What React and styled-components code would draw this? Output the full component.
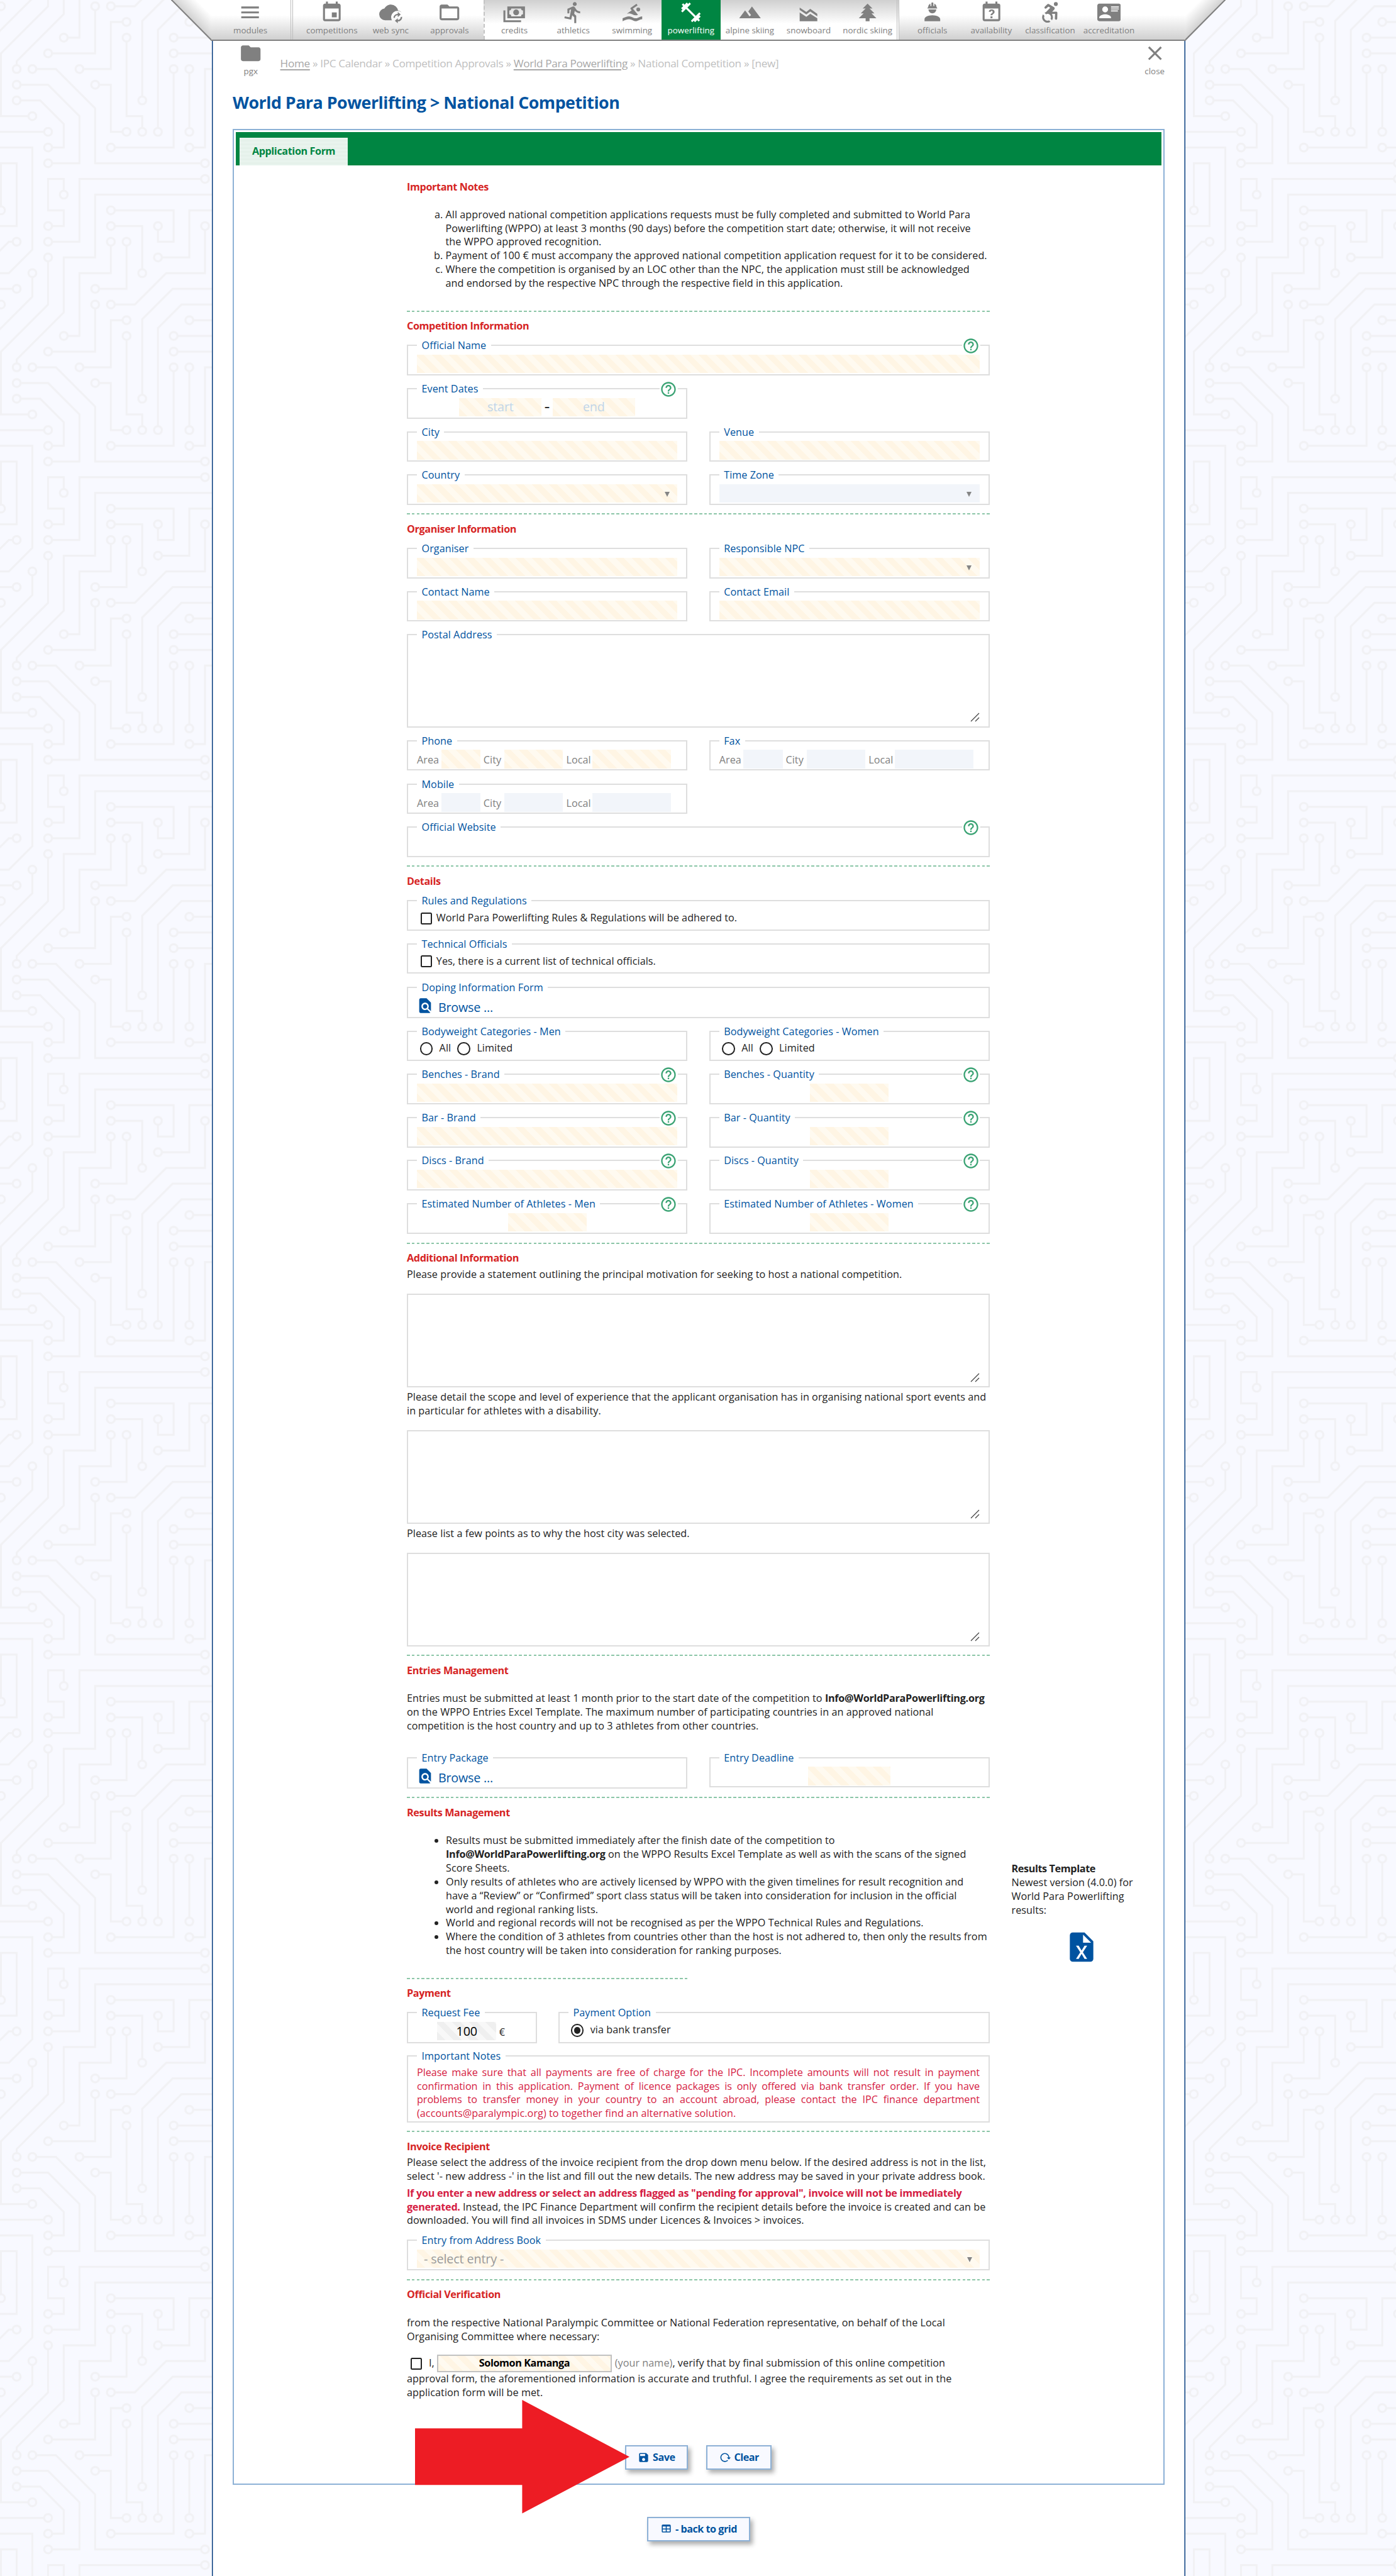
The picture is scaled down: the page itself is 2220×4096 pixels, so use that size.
import React from "react";
import styled, { createGlobalStyle, css } from "styled-components";
import {
  MdMenu, MdEvent, MdFolderOpen, MdDirectionsRun, MdFitnessCenter, MdFolder, MdClose,
  MdHelpOutline, MdFindInPage, MdSave,
} from "react-icons/md";

const c = {
  text: "#222222", grey: "#808080", red: "#d62424", crimson: "#d51c43", blue: "#0053a0",
  green: "#008542", line: "#dedede", frame: "#8db1d6",
};

const Global = createGlobalStyle`
  *, *::before, *::after { box-sizing: border-box; }
  html, body { margin: 0; padding: 0; }
  body {
    width: 2220px; height: 4096px; overflow: hidden; background: #f8f9ff; color: ${c.text};
    font-family: "Open Sans", "Noto Sans", sans-serif; font-size: 16.2px; line-height: 21.84px;
    letter-spacing: 0.05px;
  }
`;

const amber = css`background: repeating-linear-gradient(45deg, #fff5e4 0 9.36px, #fffaf0 9.36px 18.72px);`;
const ash = css`background: repeating-linear-gradient(45deg, #efefef 0 9.36px, #f8f8f8 9.36px 18.72px);`;
const pale = css`background: #f2f5fa;`;
const tones = { amber, ash, pale };

/* ---------- shell ---------- */
const Screen = styled.div`position: relative; width: 2220px; height: 4096px; overflow: hidden;`;
const Backdrop = styled.svg`position: absolute; inset: 0; width: 2220px; height: 4096px; z-index: -1;`;
const TopBar = styled.header`display: flex; width: 1677px; height: 65px; margin: 0 0 0 272px;`;
const Cap = styled.svg`display: block; flex: none; width: 64px; height: 65px;`;
const Bar = styled.nav`
  flex: 1; display: flex; height: 65px; border-bottom: 2px solid #808080;
  background: linear-gradient(#fff 0, #fff 38%, #d0d0d0 100%);
`;
const Group = styled.div`
  display: flex; height: 63px; padding: 0 ${p => p.$pr || 0}px 0 ${p => p.$pl || 0}px;
  ${p => p.$sep === "double" && "border-right: 4px double #bdbdbd;"}
  ${p => p.$inverse && css`
    border-left: 2px dashed #c4c4c4; border-right: 4px double #bdbdbd;
    background: linear-gradient(#d0d0d0 0, #fff 60%);
  `}
`;
const NavItem = styled.div`
  width: 93.6px; flex: none; height: 63px; display: flex; flex-direction: column; align-items: center;
  padding-top: 1px; font-size: 13.4px; line-height: 18px; letter-spacing: 0; white-space: nowrap;
  color: ${p => (p.$active ? "#fff" : c.grey)}; background: ${p => (p.$active ? c.green : "none")};
  svg { width: 37.4px; height: 37.4px; display: block; flex: none; margin-bottom: 1px; }
`;
const Page = styled.main`
  width: 1548px; height: 4031px; margin-left: 337px; padding: 0 1px; background: #fff;
  border: solid #00387a; border-width: 0 1px; box-shadow: inset 1px 0 #8ba5c4, inset -1px 0 #8ba5c4;
`;
const Crumbs = styled.div`display: flex; justify-content: space-between; height: 65px; padding: 0 0 0 13px;`;
const CrumbLine = styled.div`
  flex: 1; padding: 25px 0 0 0; font-size: 17.2px; line-height: 22px; letter-spacing: -0.34px; color: #c0c0c0; white-space: pre;
  u { color: #a8a8a8; text-underline-offset: 3px; text-decoration-thickness: 2px; }
`;
const Title = styled.h1`
  margin: 14px 0 0 31px; font-size: 26.8px; line-height: 38px; font-weight: 700; letter-spacing: -0.49px; color: ${c.blue};
`;
const Panel = styled.section`
  width: 1482px; height: 3746px; margin: 22.5px 0 0 31px; padding: 3px; border: 2px solid ${c.frame};
`;
const TabBar = styled.div`height: 53px; background: ${c.green}; padding: 9px 0 0 6px; display: flex;`;
const Tab = styled.div`
  width: 172px; height: 44px; padding-top: 11px; text-align: center; color: ${c.green}; font-weight: 700;
  letter-spacing: -0.4px; background: repeating-linear-gradient(#e9f4ee 0 3px, #e5f1ea 3px 6px);
`;
const Form = styled.div`position: relative; width: 927px; margin-left: 272px; padding-top: 0.1px;`;

/* ---------- form parts ---------- */
const Rule = styled.div`
  height: 2px; width: ${p => p.$w || "100%"}; margin-top: ${p => p.$mt}px;
  background: repeating-linear-gradient(90deg, #8cc6a8 0 4.68px, transparent 4.68px 7.75px);
`;
const Heading = styled.h2`
  margin: ${p => p.$mt}px 0 0; font-size: 16.2px; line-height: 22px; font-weight: 700; letter-spacing: -0.37px; color: ${c.red};
`;
const Lines = styled.div`
  margin-top: ${p => p.$mt}px; white-space: nowrap;
  b { letter-spacing: -0.28px; }
`;
const Line = styled.div`
  height: 21.84px;
  ${p => p.$justify && "text-align: justify; text-align-last: justify; letter-spacing: -0.05px; white-space: normal;"}
`;
const Alpha = styled.ol`
  margin: ${p => p.$mt}px 0 0; padding: 0 0 0 61.5px; white-space: nowrap; list-style: lower-alpha;
`;
const Bullets = styled.ul`margin: 0; padding: 0 0 0 62px; white-space: nowrap; b { letter-spacing: -0.28px; }`;
const Row = styled.div`display: flex; gap: 34.5px; align-items: flex-start; margin-top: ${p => p.$mt}px;`;
const Box = styled.fieldset`
  position: relative; width: ${p => p.$w || 927}px; height: ${p => p.$h || 58.6}px; min-width: 0; margin: 0;
  padding: ${p => p.$pt ?? 3.6}px 14px 0; border: 2px solid ${c.line};
`;
const Legend = styled.legend`padding: 0 7.5px; height: 22px; line-height: 22px; color: ${c.blue};`;
const HelpMark = styled.span`
  position: absolute; right: 13.5px; top: -24px; width: 28.5px; height: 28px; background: linear-gradient(#fff, #fff) center / 100% 8px no-repeat;
  color: #3ba374; svg { width: 28px; height: 28px; display: block; }
`;
const Input = styled.div`
  ${p => tones[p.$tone || "amber"]}
  width: ${p => (p.$w ? p.$w + "px" : "100%")}; height: 29.4px; display: flex; align-items: center;
  justify-content: ${p => (p.$center ? "center" : "space-between")}; flex: none; white-space: pre;
  padding: ${p => (p.$center ? 0 : "0 12.5px 0 11px")}; font-size: 19.8px; letter-spacing: -0.15px; color: ${p => p.$color || "#999"};
`;
const Caret = styled.i`border: solid transparent; border-width: 8px 4.5px 0; border-top-color: #858585; margin: 3px 0 0 auto;`;
const Parts = styled.div`
  display: flex; justify-content: ${p => (p.$center ? "center" : "flex-start")}; align-items: center;
  color: ${p => p.$color || c.text}; white-space: pre;
`;
const PartLabel = styled.span`width: ${p => p.$w}px; padding-left: ${p => p.$pl || 0}px; padding-top: 4px; flex: none;`;
const Dash = styled.span`width: 17.5px; text-align: center; font-weight: 700; font-size: 16px;`;
const Area = styled.div`
  height: ${p => p.$h}px; margin-top: ${p => p.$mt || 0}px; border: ${p => (p.$bare ? 0 : 2)}px solid ${c.line};
  padding: 0 ${p => (p.$bare ? 0 : 14)}px 6px 0; display: flex; justify-content: flex-end; align-items: flex-end;
  svg { width: 15px; height: 15px; display: block; }
`;
const Check = styled.span`
  flex: none; display: inline-block; width: 18.8px; height: 18.8px; border: 2.4px solid #222; border-radius: 2.5px; margin: 0 6.5px 0 5.5px;
`;
const Radio = styled.span`
  flex: none; width: 20.6px; height: 20.6px; border: 2.3px solid #222; border-radius: 50%; margin-right: 10.5px;
  display: flex; align-items: center; justify-content: center;
  &::after { content: ""; width: 10.4px; height: 10.4px; border-radius: 50%; background: ${p => (p.$on ? "#222" : "none")}; }
`;
const Word = styled.span`${p => p.$w && `width: ${p.$w}px;`} flex: none;`;
const Browse = styled.div`
  display: flex; align-items: center; gap: 7px; color: ${c.blue}; font-size: 19.8px; letter-spacing: -0.25px; white-space: pre;
  padding-top: 3px; svg { width: 28px; height: 28px; margin: -6px 0 0 -1px; }
`;
const Split = styled.div`display: flex; gap: 34.5px; margin-top: 23.4px;`;
const MainCol = styled.div`width: 927px; flex: none;`;
const Aside = styled.aside`
  flex: none; width: 220px; padding-top: 45px; white-space: nowrap; display: flex; flex-direction: column;
  b { letter-spacing: -0.38px; } svg { width: 56px; height: 56px; margin: 19px 0 0 83px; color: ${c.blue}; }
`;
const NameField = styled.span`
  ${amber} width: 278.3px; height: 28px; border: 2px solid #c2c2c2; display: flex; align-items: center; justify-content: center;
  font-weight: 700; color: #000; letter-spacing: -0.4px; margin: 0 4.5px 0 4px;
`;
const Muted = styled.span`color: ${c.grey};`;
const Warning = styled.b`color: ${c.crimson};`;
const Arrow = styled.svg`position: absolute; left: 13.3px; top: 3553.8px; width: 341px; height: 181px;`;
const Actions = styled.div`display: flex; justify-content: center; gap: 29.5px; margin-top: ${p => p.$mt}px;`;
const Button = styled.button`
  font: inherit; font-weight: 700; letter-spacing: -0.5px; color: ${c.blue}; width: ${p => p.$w}px; height: 38.5px; padding: 1px 0 0;
  display: flex; align-items: center; justify-content: center; gap: 5px; border: 2px solid ${c.frame}; background: #f8f9ff;
  box-shadow: 4px 5px 7px rgba(0, 0, 0, 0.32); white-space: pre;
  svg { width: 19px; height: 19px; flex: none; margin-top: -2px; }
`;

/* ---------- icons ---------- */
const Glyph = ({ d, children }) => (
  <svg viewBox="0 0 24 24" fill="currentColor">{d ? <path d={d} /> : children}</svg>
);
const paths = {
  cash: "M5,6H23V18H5V6M14,9A3,3 0 0,1 17,12A3,3 0 0,1 14,15A3,3 0 0,1 11,12A3,3 0 0,1 14,9M9,8A2,2 0 0,1 7,10V14A2,2 0 0,1 9,16H19A2,2 0 0,1 21,14V10A2,2 0 0,1 19,8H9M1,10H3V20H19V22H1V10Z",
  swim: "M2,18C4.22,17 6.44,16 8.67,16C10.89,16 13.11,18 15.33,18C17.56,18 19.78,16 22,16V19C19.78,19 17.56,21 15.33,21C13.11,21 10.89,19 8.67,19C6.44,19 4.22,20 2,21V18M8.67,13C7.89,13 7.12,13.12 6.35,13.32L11.27,9.88L10.23,8.64C10.09,8.47 10,8.24 10,8C10,7.66 10.17,7.35 10.44,7.17L16.16,3.17L17.31,4.8L12.47,8.19L17.7,14.42C16.91,14.75 16.12,15 15.33,15C13.11,15 10.89,13 8.67,13M18,7A2,2 0 0,1 20,9A2,2 0 0,1 18,11A2,2 0 0,1 16,9A2,2 0 0,1 18,7Z",
  alpine: "M14,6L10.25,11L13.1,14.8L11.5,16C9.81,13.75 7,10 7,10L1,18H23L14,6Z",
  slope: "M3,7L9.8,11.6L13.8,8.4L21,13.4V16L13.8,11L9.8,14.2L3,9.4ZM3,12L9.8,16.6L13.8,13.5L21,18V21H3Z",
  pine: "M10,21V18H3L8,13H5L10,8H7L12,3L17,8H14L19,13H16L21,18H14V21H10Z",
  official: "M12,15C7.58,15 4,16.79 4,19V21H20V19C20,16.79 16.42,15 12,15M8,9A4,4 0 0,0 12,13A4,4 0 0,0 16,9M11.5,2C11.2,2 11,2.21 11,2.5V5.5H10V3C10,3 7.75,3.86 7.75,6.75C7.75,6.75 7,6.89 7,8H17C16.95,6.89 16.25,6.75 16.25,6.75C16.25,3.86 14,3 14,3V5.5H13V2.5C13,2.21 12.81,2 12.5,2H11.5Z",
  question: "M6,1V3H5C3.89,3 3,3.89 3,5V19A2,2 0 0,0 5,21H19A2,2 0 0,0 21,19V5A2,2 0 0,0 19,3H18V1H16V3H8V1H6M5,8H19V19H5V8M12.19,9C11.32,9 10.62,9.2 10.08,9.59C9.56,10 9.3,10.57 9.31,11.36L9.32,11.39H11.25C11.26,11.09 11.35,10.86 11.53,10.7C11.71,10.55 11.93,10.47 12.19,10.47C12.5,10.47 12.76,10.57 12.94,10.75C13.12,10.94 13.2,11.2 13.2,11.5C13.2,11.82 13.13,12.09 12.97,12.32C12.83,12.55 12.62,12.75 12.36,12.91C11.85,13.25 11.5,13.55 11.31,13.82C11.11,14.08 11,14.5 11,15H13C13,14.69 13.04,14.44 13.13,14.26C13.22,14.08 13.39,13.9 13.64,13.74C14.09,13.5 14.46,13.21 14.75,12.81C15.04,12.41 15.19,12 15.19,11.5C15.19,10.74 14.92,10.13 14.38,9.68C13.85,9.23 13.12,9 12.19,9M11,16V18H13V16H11Z",
  wheelchair: "M18.4,11.2L14.3,11.4L16.6,8.8C16.8,8.5 16.9,8 16.8,7.5C16.7,7.2 16.6,6.9 16.3,6.7L10.9,3.5C10.5,3.2 9.9,3.3 9.5,3.6L6.8,6.1C6.3,6.6 6.2,7.3 6.7,7.8C7.1,8.3 7.9,8.3 8.4,7.9L10.4,6.1L12.3,7.2L8.1,11.5C8,11.6 8,11.7 7.9,11.7C7.4,11.9 6.9,12.1 6.5,12.4L8,13.9C8.5,13.7 9,13.5 9.5,13.5C11.4,13.5 13,15.1 13,17C13,17.6 12.9,18.1 12.6,18.5L14.1,20C14.7,19.1 15,18.1 15,17C15,15.8 14.6,14.6 13.9,13.7L17.2,13.4L17,18.2C16.9,18.9 17.4,19.4 18.1,19.5H18.2C18.8,19.5 19.3,19 19.4,18.4L19.6,12.5C19.6,12.2 19.5,11.8 19.3,11.6C19,11.3 18.7,11.2 18.4,11.2M18,5.5A2,2 0 0,0 20,3.5A2,2 0 0,0 18,1.5A2,2 0 0,0 16,3.5A2,2 0 0,0 18,5.5M12.5,21.6C11.6,22.2 10.6,22.5 9.5,22.5C6.5,22.5 4,20 4,17C4,15.9 4.3,14.9 4.9,14L6.4,15.5C6.2,16 6,16.5 6,17C6,18.9 7.6,20.5 9.5,20.5C10.1,20.5 10.6,20.4 11,20.1L12.5,21.6Z",
  card: "M2,3H22C23.05,3 24,3.95 24,5V19C24,20.05 23.05,21 22,21H2C0.95,21 0,20.05 0,19V5C0,3.95 0.95,3 2,3M14,6V7H22V6H14M14,8V9H21.5L22,9V8H14M14,10V11H21V10H14M8,13.91C6,13.91 2,15 2,17V18H14V17C14,15 10,13.91 8,13.91M8,6A3,3 0 0,0 5,9A3,3 0 0,0 8,12A3,3 0 0,0 11,9A3,3 0 0,0 8,6Z",
  excel: "M14,2H6A2,2 0 0,0 4,4V20A2,2 0 0,0 6,22H18A2,2 0 0,0 20,20V8L14,2M15.8,20H14L12,16.6L10,20H8.2L11.1,15.5L8.2,11H10L12,14.4L14,11H15.8L12.9,15.5L15.8,20M13,9V3.5L18.5,9H13Z",
  reload: "M2 12C2 16.97 6.03 21 11 21C13.39 21 15.68 20.06 17.4 18.4L15.9 16.9C14.63 18.25 12.86 19 11 19C4.76 19 1.64 11.46 6.05 7.05C10.46 2.64 18 5.77 18 12H15L19 16H19.1L23 12H20C20 7.03 15.97 3 11 3C6.03 3 2 7.03 2 12Z",
  table: "M5,4H19A2,2 0 0,1 21,6V18A2,2 0 0,1 19,20H5A2,2 0 0,1 3,18V6A2,2 0 0,1 5,4M5,8V12H11V8H5M13,8V12H19V8H13M5,14V18H11V14H5M13,14V18H19V14H13Z",
};
const CloudSync = () => (
  <Glyph>
    <path d="M19.35 10.04A7.49 7.49 0 0 0 12 4C9.11 4 6.6 5.64 5.35 8.04A6 6 0 0 0 6 20h7a6.5 6.5 0 0 1 10-8 5 5 0 0 0-3.65-1.96z" />
    <g fill="none" stroke="currentColor" strokeWidth="1.5">
      <path d="M15.3 17.6a3.6 3.6 0 0 1 3.6-3.4h1" /><path d="M22.7 16.6a3.6 3.6 0 0 1-3.6 3.9h-1" />
    </g>
    <path d="M19 11.6l3 2.6-3 2.6zM19 17.9l-3 2.6 3 2.6z" />
  </Glyph>
);

const traces =
  "M44.1 224a5 5 0 1 1 0 2H0v-2h44.1zm160 48a5 5 0 1 1 0 2H82v-2h122.1zm57.8-46a5 5 0 1 1 0-2H304v2h-42.1zm0 16a5 5 0 1 1 0-2H304v2h-42.1zm6.2-114a5 5 0 1 1 0 2h-86.2a5 5 0 1 1 0-2h86.2zm-256-48a5 5 0 1 1 0 2H0v-2h12.1zm185.8 34a5 5 0 1 1 0-2h86.2a5 5 0 1 1 0 2h-86.2zM258 12.1a5 5 0 1 1-2 0V0h2v12.1zm-64 208a5 5 0 1 1-2 0v-54.2a5 5 0 1 1 2 0v54.2zm48-198.2V80h62v2h-64V21.9a5 5 0 1 1 2 0zm16 16V64h46v2h-48V37.9a5 5 0 1 1 2 0zm-128 96V208h16v12.1a5 5 0 1 1-2 0V210h-16v-76.1a5 5 0 1 1 2 0zm-5.9-21.9a5 5 0 1 1 0 2H114v48H85.9a5 5 0 1 1 0-2H112v-48h12.1zm-6.2 130a5 5 0 1 1 0-2H176v-74.1a5 5 0 1 1 2 0V242h-60.1zm-16-64a5 5 0 1 1 0-2H114v48h10.1a5 5 0 1 1 0 2H112v-48h-10.1zM66 284.1a5 5 0 1 1-2 0V274H50v30h-2v-32h18v12.1zM236.1 176a5 5 0 1 1 0 2H226v94h48v32h-2v-30h-48v-98h12.1zm25.8-30a5 5 0 1 1 0-2H274v44.1a5 5 0 1 1-2 0V146h-10.1zm-64 96a5 5 0 1 1 0-2H208v-80h16v-14h-42.1a5 5 0 1 1 0-2H226v18h-16v80h-12.1zm86.2-210a5 5 0 1 1 0 2H272V0h2v32h10.1zM98 101.9V146H53.9a5 5 0 1 1 0-2H96v-42.1a5 5 0 1 1 2 0zM53.9 34a5 5 0 1 1 0-2H80V0h2v34H53.9zm60.1 3.9V66H82v64H69.9a5 5 0 1 1 0-2H80V64h32V37.9a5 5 0 1 1 2 0zM101.9 82a5 5 0 1 1 0-2H128V37.9a5 5 0 1 1 2 0V82h-28.1zm16-64a5 5 0 1 1 0-2H146v44.1a5 5 0 1 1-2 0V18h-26.1zm102.2 270a5 5 0 1 1 0 2H98v14h-2v-16h124.1zM242 149.9V160h16v34h-16v62h48v48h-2v-46h-48v-66h16v-30h-16v-12.1a5 5 0 1 1 2 0zM53.9 18a5 5 0 1 1 0-2H64V2H48V0h18v18H53.9zm112 32a5 5 0 1 1 0-2H192V0h50v2h-48v48h-28.1zm-48-48a5 5 0 0 1-9.8-2h2.07a3 3 0 1 0 5.66 0H178v34h-18V21.9a5 5 0 1 1 2 0V32h14V2h-58.1zm0 96a5 5 0 1 1 0-2H137l32-32h39V21.9a5 5 0 1 1 2 0V66h-40.17l-32 32H117.9zm28.1 90.1a5 5 0 1 1-2 0v-76.51L175.59 80H224V21.9a5 5 0 1 1 2 0V82h-49.59L146 112.41v75.69zm16 32a5 5 0 1 1-2 0v-99.51L184.59 96H300.1a5 5 0 0 1 3.9-3.9v2.07a3 3 0 0 0 0 5.66v2.07a5 5 0 0 1-3.9-3.9H185.41L162 121.41v98.69zm-144-64a5 5 0 1 1-2 0v-3.51l48-48V48h32V0h2v50H66v55.41l-48 48v2.69zM50 53.9v43.51l-48 48V208h26.1a5 5 0 1 1 0 2H0v-65.41l48-48V53.9a5 5 0 1 1 2 0zm-16 16V89.41l-34 34v-2.82l32-32V69.9a5 5 0 1 1 2 0zM12.1 32a5 5 0 1 1 0 2H9.41L0 43.41V40.6L8.59 32h3.51zm265.8 18a5 5 0 1 1 0-2h18.69l7.41-7.41v2.82L297.41 50H277.9zm-16 160a5 5 0 1 1 0-2H288v-71.41l16-16v2.82l-14 14V210h-28.1zm-208 32a5 5 0 1 1 0-2H64v-22.59L40.59 194H21.9a5 5 0 1 1 0-2H41.41L66 216.59V242H53.9zm150.2 14a5 5 0 1 1 0 2H96v-56.6L56.6 162H37.9a5 5 0 1 1 0-2h19.5L98 200.6V256h106.1zm-150.2 2a5 5 0 1 1 0-2H80v-46.59L48.59 178H21.9a5 5 0 1 1 0-2H49.41L82 208.59V258H53.9zM34 39.8v1.61L9.41 66H0v-2h8.59L32 40.59V0h2v39.8zM2 300.1a5 5 0 0 1 3.9 3.9H3.83A3 3 0 0 0 0 302.17V256h18v48h-2v-46H2v42.1zM34 241v63h-2v-62H0v-2h34v1zM17 18H0v-2h16V0h2v18h-1zm273-2h14v2h-16V0h2v16zm-32 273v15h-2v-14h-14v14h-2v-16h18v1zM0 92.1A5.02 5.02 0 0 1 6 97a5 5 0 0 1-6 4.9v-2.07a3 3 0 1 0 0-5.66V92.1zM80 272h2v32h-2v-32zm37.9 32h-2.07a3 3 0 0 0-5.66 0h-2.07a5 5 0 0 1 9.8 0zM5.9 0A5.02 5.02 0 0 1 0 5.9V3.83A3 3 0 0 0 3.83 0H5.9zm294.2 0h2.07A3 3 0 0 0 304 3.83V5.9a5 5 0 0 1-3.9-5.9zm3.9 300.1v2.07a3 3 0 0 0-1.83 1.83h-2.07a5 5 0 0 1 3.9-3.9z";
const vias = [
  [49,225],[209,273],[257,225],[257,241],[273,129],[177,129],[17,81],[193,113],[289,113],[257,17],[193,225],[193,161],
  [241,17],[257,33],[145,225],[129,129],[129,113],[81,161],[113,241],[177,161],[97,177],[129,225],[65,289],[241,177],
  [257,145],[273,193],[193,241],[177,145],[289,33],[49,145],[97,97],[49,33],[65,129],[113,33],[97,81],[129,33],[113,17],
  [145,65],[225,289],[241,145],[49,17],[161,49],[161,17],[113,97],[209,17],[145,193],[225,17],[161,225],[17,161],
  [33,209],[49,49],[33,65],[17,33],[273,49],[257,209],[49,241],[17,193],[209,257],[33,161],[49,257],[17,177],
];

const Circuit = () => (
  <Backdrop>
    <defs>
      <pattern id="circuit" width="304" height="304" patternUnits="userSpaceOnUse" patternTransform="translate(0 -141.4) scale(1.56008)">
        <path d={traces} fill="#f1f1f4" />
        {vias.map(([x, y]) => <circle key={x + "-" + y} cx={x} cy={y} r="3" fill="#f8f9ff" />)}
      </pattern>
    </defs>
    <rect width="2220" height="4096" fill="url(#circuit)" />
  </Backdrop>
);

const CapLeft = () => (
  <Cap viewBox="0 0 64 65">
    <defs>
      <linearGradient id="capL" gradientUnits="userSpaceOnUse" x1="64" y1="64" x2="84" y2="44">
        <stop offset="0" stopColor="#d0d0d0" /><stop offset="1" stopColor="#fff" />
      </linearGradient>
    </defs>
    <path d="M0 0H64.5V65H64z" fill="url(#capL)" /><path d="M0 -1L65 64.5" stroke="#808080" strokeWidth="2" />
  </Cap>
);
const CapRight = () => (
  <Cap viewBox="0 0 64 65">
    <defs>
      <linearGradient id="capR" gradientUnits="userSpaceOnUse" x1="0" y1="64" x2="-20" y2="44">
        <stop offset="0" stopColor="#d0d0d0" /><stop offset="1" stopColor="#fff" />
      </linearGradient>
    </defs>
    <path d="M64 0H0V65H0.5z" fill="url(#capR)" /><path d="M64 -1L-1 64.5" stroke="#808080" strokeWidth="2" />
  </Cap>
);

/* ---------- composed fields ---------- */
const HALF = 446.2;
const Field = ({ label, help, children, w, h, pt }) => (
  <Box $w={w} $h={h} $pt={pt}>
    <Legend>{label}</Legend>
    {help && <HelpMark><MdHelpOutline /></HelpMark>}
    {children}
  </Box>
);
const Select = ({ tone, children }) => <Input $tone={tone}>{children}<Caret /></Input>;
const Grip = () => (
  <svg viewBox="0 0 15 15"><path d="M1 14L14 1M8 14L14 8" stroke="#444" strokeWidth="1.3" fill="none" /></svg>
);
const PhoneParts = ({ tone }) => (
  <Parts $color={c.grey}>
    <PartLabel $w={38.8}>Area</PartLabel><Input $tone={tone} $w={62.7} $center />
    <PartLabel $w={37.6} $pl={4.3}>City</PartLabel><Input $tone={tone} $w={93.4} $center />
    <PartLabel $w={47} $pl={5}>Local</PartLabel><Input $tone={tone} $w={124.8} $center />
  </Parts>
);
const Categories = () => (
  <Parts>
    <Word $w={4.5} /><Radio /><Word $w={28.7}>All</Word><Radio />Limited
  </Parts>
);
const Centered = ({ w }) => <Parts $center><Input $w={w} $center /></Parts>;
const Upload = () => <Browse><MdFindInPage />Browse ...</Browse>;
const Nav = ({ icon, label, active }) => <NavItem $active={active}>{icon}{label}</NavItem>;

export default function App() {
  return (
    <Screen>
      <Global />
      <Circuit />
      <TopBar>
        <CapLeft />
        <Bar>
          <Group $pl={15.4} $pr={17} $sep="double"><Nav icon={<MdMenu />} label="modules" /></Group>
          <Group $pl={15} $pr={7.5}>
            <Nav icon={<MdEvent />} label="competitions" />
            <Nav icon={<CloudSync />} label="web sync" />
            <Nav icon={<MdFolderOpen />} label="approvals" />
          </Group>
          <Group $inverse>
            <Nav icon={<Glyph d={paths.cash} />} label="credits" />
            <Nav icon={<MdDirectionsRun />} label="athletics" />
            <Nav icon={<Glyph d={paths.swim} />} label="swimming" />
            <Nav icon={<MdFitnessCenter />} label="powerlifting" active />
            <Nav icon={<Glyph d={paths.alpine} />} label="alpine skiing" />
            <Nav icon={<Glyph d={paths.slope} />} label="snowboard" />
            <Nav icon={<Glyph d={paths.pine} />} label="nordic skiing" />
          </Group>
          <Group $pl={5.5}>
            <Nav icon={<Glyph d={paths.official} />} label="officials" />
            <Nav icon={<Glyph d={paths.question} />} label="availability" />
            <Nav icon={<Glyph d={paths.wheelchair} />} label="classification" />
            <Nav icon={<Glyph d={paths.card} />} label="accreditation" />
          </Group>
        </Bar>
        <CapRight />
      </TopBar>

      <Page>
        <Crumbs>
          <NavItem><MdFolder />pgx</NavItem>
          <CrumbLine>
            <u>Home</u>{" » IPC Calendar » Competition Approvals » "}<u>World Para Powerlifting</u>{" » National Competition » [new]"}
          </CrumbLine>
          <NavItem><MdClose />close</NavItem>
        </Crumbs>
        <Title>World Para Powerlifting &gt; National Competition</Title>

        <Panel>
          <TabBar><Tab>Application Form</Tab></TabBar>
          <Form>
            <Heading $mt={23.1}>Important Notes</Heading>
            <Alpha $mt={23}>
              <li>
                <Line>All approved national competition applications requests must be fully completed and submitted to World Para</Line>
                <Line>Powerlifting (WPPO) at least 3 months (90 days) before the competition start date; otherwise, it will not receive</Line>
                <Line>the WPPO approved recognition.</Line>
              </li>
              <li><Line>Payment of 100 € must accompany the approved national competition application request for it to be considered.</Line></li>
              <li>
                <Line>Where the competition is organised by an LOC other than the NPC, the application must still be acknowledged</Line>
                <Line>and endorsed by the respective NPC through the respective field in this application.</Line>
              </li>
            </Alpha>

            <Rule $mt={32.3} />
            <Heading $mt={11.3}>Competition Information</Heading>
            <Row $mt={9.2}><Field label="Official Name" help><Input /></Field></Row>
            <Row $mt={10}>
              <Field label="Event Dates" help w={HALF}>
                <Parts $center>
                  <Input $w={131} $center $color="#c0d5e8">start</Input><Dash>–</Dash><Input $w={131} $center $color="#c0d5e8">end</Input>
                </Parts>
              </Field>
            </Row>
            <Row $mt={10}>
              <Field label="City" w={HALF}><Input /></Field>
              <Field label="Venue" w={HALF}><Input /></Field>
            </Row>
            <Row $mt={10}>
              <Field label="Country" w={HALF}><Select /></Field>
              <Field label="Time Zone" w={HALF}><Select tone="pale" /></Field>
            </Row>

            <Rule $mt={13.5} />
            <Heading $mt={11.4}>Organiser Information</Heading>
            <Row $mt={9.5}>
              <Field label="Organiser" w={HALF}><Input /></Field>
              <Field label="Responsible NPC" w={HALF}><Select /></Field>
            </Row>
            <Row $mt={9.9}>
              <Field label="Contact Name" w={HALF}><Input /></Field>
              <Field label="Contact Email" w={HALF}><Input /></Field>
            </Row>
            <Row $mt={9.8}><Field label="Postal Address" h={158.9} pt={0}><Area $bare $h={134}><Grip /></Area></Field></Row>
            <Row $mt={9.8}>
              <Field label="Phone" w={HALF}><PhoneParts tone="amber" /></Field>
              <Field label="Fax" w={HALF}><PhoneParts tone="pale" /></Field>
            </Row>
            <Row $mt={10.2}><Field label="Mobile" w={HALF}><PhoneParts tone="pale" /></Field></Row>
            <Row $mt={10.2}><Field label="Official Website" help /></Row>

            <Rule $mt={13.5} />
            <Heading $mt={11.5}>Details</Heading>
            <Row $mt={9.5}>
              <Field label="Rules and Regulations" pt={5.8}>
                <Parts><Check />World Para Powerlifting Rules &amp; Regulations will be adhered to.</Parts>
              </Field>
            </Row>
            <Row $mt={9.8}>
              <Field label="Technical Officials" pt={5.8}>
                <Parts><Check />Yes, there is a current list of technical officials.</Parts>
              </Field>
            </Row>
            <Row $mt={10.3}><Field label="Doping Information Form" h={60.2} pt={7}><Upload /></Field></Row>
            <Row $mt={9.8}>
              <Field label="Bodyweight Categories - Men" w={HALF} pt={5.8}><Categories /></Field>
              <Field label="Bodyweight Categories - Women" w={HALF} pt={5.8}><Categories /></Field>
            </Row>
            <Row $mt={9.9}>
              <Field label="Benches - Brand" help w={HALF}><Input /></Field>
              <Field label="Benches - Quantity" help w={HALF}><Centered w={125} /></Field>
            </Row>
            <Row $mt={10.2}>
              <Field label="Bar - Brand" help w={HALF}><Input /></Field>
              <Field label="Bar - Quantity" help w={HALF}><Centered w={125} /></Field>
            </Row>
            <Row $mt={9.9}>
              <Field label="Discs - Brand" help w={HALF}><Input /></Field>
              <Field label="Discs - Quantity" help w={HALF}><Centered w={125} /></Field>
            </Row>
            <Row $mt={10.2}>
              <Field label="Estimated Number of Athletes - Men" help w={HALF}><Centered w={125} /></Field>
              <Field label="Estimated Number of Athletes - Women" help w={HALF}><Centered w={125} /></Field>
            </Row>

            <Rule $mt={13.8} />
            <Heading $mt={11.2}>Additional Information</Heading>
            <Lines $mt={5.4}><Line>Please provide a statement outlining the principal motivation for seeking to host a national competition.</Line></Lines>
            <Area $h={148.6} $mt={18.9}><Grip /></Area>
            <Lines $mt={5.6}>
              <Line>Please detail the scope and level of experience that the applicant organisation has in organising national sport events and</Line>
              <Line>in particular for athletes with a disability.</Line>
            </Lines>
            <Area $h={148.6} $mt={19.2}><Grip /></Area>
            <Lines $mt={5.4}><Line>Please list a few points as to why the host city was selected.</Line></Lines>
            <Area $h={148.6} $mt={19.3}><Grip /></Area>

            <Rule $mt={13.5} />
            <Heading $mt={11.7}>Entries Management</Heading>
            <Lines $mt={23.4}>
              <Line>Entries must be submitted at least 1 month prior to the start date of the competition to <b>Info@WorldParaPowerlifting.org</b></Line>
              <Line>on the WPPO Entries Excel Template. The maximum number of participating countries in an approved national</Line>
              <Line>competition is the host country and up to 3 athletes from other countries.</Line>
            </Lines>
            <Row $mt={28}>
              <Field label="Entry Package" w={HALF} h={60.2} pt={7}><Upload /></Field>
              <Field label="Entry Deadline" w={HALF}><Centered w={131} /></Field>
            </Row>

            <Rule $mt={13.6} />
            <Heading $mt={11.5}>Results Management</Heading>
            <Split>
              <MainCol>
                <Bullets>
                  <li>
                    <Line>Results must be submitted immediately after the finish date of the competition to</Line>
                    <Line><b>Info@WorldParaPowerlifting.org</b> on the WPPO Results Excel Template as well as with the scans of the signed</Line>
                    <Line>Score Sheets.</Line>
                  </li>
                  <li>
                    <Line>Only results of athletes who are actively licensed by WPPO with the given timelines for result recognition and</Line>
                    <Line>have a “Review” or “Confirmed” sport class status will be taken into consideration for inclusion in the official</Line>
                    <Line>world and regional ranking lists.</Line>
                  </li>
                  <li><Line>World and regional records will not be recognised as per the WPPO Technical Rules and Regulations.</Line></li>
                  <li>
                    <Line>Where the condition of 3 athletes from countries other than the host is not adhered to, then only the results from</Line>
                    <Line>the host country will be taken into consideration for ranking purposes.</Line>
                  </li>
                </Bullets>
                <Rule $mt={31.8} $w="446px" />
              </MainCol>
              <Aside>
                <b>Results Template</b>
                <Line>Newest version (4.0.0) for</Line>
                <Line>World Para Powerlifting</Line>
                <Line>results:</Line>
                <Glyph d={paths.excel} />
              </Aside>
            </Split>

            <Heading $mt={11.7}>Payment</Heading>
            <Row $mt={8.9}>
              <Field label="Request Fee" w={206.5} h={59.3}>
                <Parts><Word $w={32.3} /><Input $tone="ash" $w={94} $center $color="#000">100</Input><PartLabel $w={20} $pl={4.5}>€</PartLabel></Parts>
              </Field>
              <Field label="Payment Option" w={686} h={59.3} pt={6.2}>
                <Parts><Word $w={3.6} /><Radio $on />via bank transfer</Parts>
              </Field>
            </Row>
            <Row $mt={9.7}>
              <Field label="Important Notes" h={116.4} pt={4.5}>
                <Parts $color={c.crimson}>
                  <Word $w={895}>
                    <Line $justify>Please make sure that all payments are free of charge for the IPC. Incomplete amounts will not result in payment</Line>
                    <Line $justify>confirmation in this application. Payment of licence packages is only offered via bank transfer order. If you have</Line>
                    <Line $justify>problems to transfer money in your country to an account abroad, please contact the IPC finance department</Line>
                    <Line>(accounts@paralympic.org) to together find an alternative solution.</Line>
                  </Word>
                </Parts>
              </Field>
            </Row>

            <Rule $mt={13.5} />
            <Heading $mt={11.6}>Invoice Recipient</Heading>
            <Lines $mt={4.6}>
              <Line>Please select the address of the invoice recipient from the drop down menu below. If the desired address is not in the list,</Line>
              <Line>select '- new address -' in the list and fill out the new details. The new address may be saved in your private address book.</Line>
            </Lines>
            <Lines $mt={4.9}>
              <Line><Warning>If you enter a new address or select an address flagged as "pending for approval", invoice will not be immediately</Warning></Line>
              <Line><Warning>generated.</Warning> Instead, the IPC Finance Department will confirm the recipient details before the invoice is created and can be</Line>
              <Line>downloaded. You will find all invoices in SDMS under Licences &amp; Invoices &gt; invoices.</Line>
            </Lines>
            <Row $mt={9.2}><Field label="Entry from Address Book"><Select>- select entry -</Select></Field></Row>

            <Rule $mt={13.8} />
            <Heading $mt={11.3}>Official Verification</Heading>
            <Lines $mt={23.6}>
              <Line>from the respective National Paralympic Committee or National Federation representative, on behalf of the Local</Line>
              <Line>Organising Committee where necessary:</Line>
            </Lines>
            <Lines $mt={17.8}>
              <Parts>
                <Check />{" I,"}<NameField>Solomon Kamanga</NameField>
                <Muted>(your name)</Muted>, verify that by final submission of this online competition
              </Parts>
              <Line>approval form, the aforementioned information is accurate and truthful. I agree the requirements as set out in the</Line>
              <Line>application form will be met.</Line>
            </Lines>
            <Actions $mt={72.5}>
              <Button $w={100}><MdSave />Save</Button>
              <Button $w={104}><Glyph d={paths.reload} />Clear</Button>
            </Actions>
            <Arrow viewBox="0 0 341 181"><path d="M0 45.2H170.4V0L341 90.4L170.4 180.5V135.3H0z" fill="#ed1c24" /></Arrow>
          </Form>
        </Panel>
        <Actions $mt={51.5}>
          <Button $w={164}><Glyph d={paths.table} />- back to grid</Button>
        </Actions>
      </Page>
    </Screen>
  );
}
